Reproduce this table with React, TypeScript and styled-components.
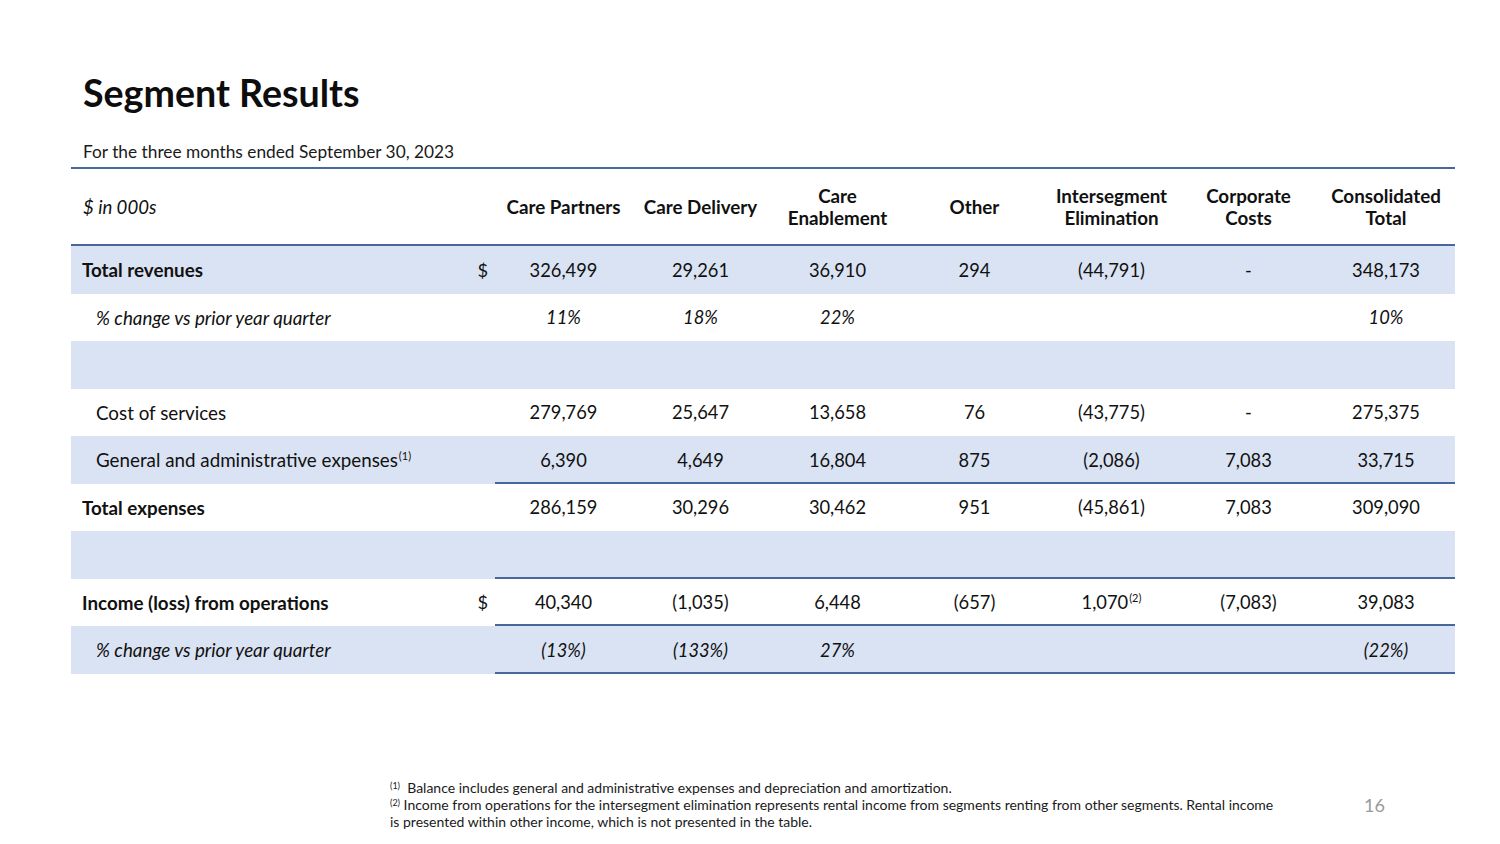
import React from "react";
import styled, { createGlobalStyle, css } from "styled-components";

const Global = createGlobalStyle`
  html, body { margin: 0; padding: 0; background: #ffffff; }
  body { font-family: Lato, "Open Sans", Arial, sans-serif; color: #111111; }
  * { box-sizing: border-box; }
`;

const RULE = "#48679a";
const SHADE = "#dae3f3";
const COLS = "424px repeat(6, 137px) 138px";

const Slide = styled.div`
  width: 1500px;
  height: 844px;
  display: flex;
  flex-direction: column;
  padding: 0 45px 0 71px;
  overflow: hidden;
`;

const Title = styled.h1`
  margin: 69px 0 0 12px;
  font-size: 37.6px;
  line-height: 48px;
  font-weight: 700;
  color: #0d0d0d;
`;

const Caption = styled.div`
  margin-top: 25px;
  padding: 0 0 5px 12px;
  font-size: 17.3px;
  line-height: 20px;
  border-bottom: 2px solid ${RULE};
  color: #1a1a1a;
`;

const Table = styled.div`
  display: flex;
  flex-direction: column;
`;

const HeadRow = styled.div`
  display: grid;
  grid-template-columns: ${COLS};
  height: 77px;
  border-bottom: 2px solid ${RULE};
  align-items: center;
`;

const HeadLabel = styled.div`
  padding-left: 12px;
  font-size: 18.6px;
  font-style: italic;
`;

const HeadCell = styled.div`
  text-align: center;
  font-size: 18.8px;
  font-weight: 700;
  line-height: 22px;
`;

const Row = styled.div<{ $shade?: boolean }>`
  display: grid;
  grid-template-columns: ${COLS};
  height: 47.5px;
  background: ${(p) => (p.$shade ? SHADE : "#ffffff")};
`;

const LabelCell = styled.div<{ $bold?: boolean; $indent?: boolean; $italic?: boolean }>`
  display: flex;
  align-items: center;
  justify-content: space-between;
  padding: 0 7px 0 ${(p) => (p.$indent ? "25px" : "11px")};
  font-size: 18.8px;
  font-weight: ${(p) => (p.$bold ? 700 : 400)};
  font-style: ${(p) => (p.$italic ? "italic" : "normal")};
`;

const Dollar = styled.span`
  font-weight: 400;
  font-style: normal;
  font-size: 18.2px;
`;

const ValueCell = styled.div<{ $rule?: boolean; $italic?: boolean }>`
  display: flex;
  align-items: center;
  justify-content: center;
  font-size: 18.3px;
  font-style: ${(p) => (p.$italic ? "italic" : "normal")};
  ${(p) =>
    p.$rule &&
    css`
      box-shadow: inset 0 -2px 0 ${RULE};
    `}
`;

const Sup = styled.sup`
  font-size: 11px;
  line-height: 0;
  vertical-align: 7px;
  margin-left: 1px;
`;

const Footer = styled.div`
  margin-top: auto;
  margin-bottom: 14px;
  display: flex;
  align-items: center;
`;

const Notes = styled.div`
  margin-left: 319px;
  width: 893px;
  font-size: 14px;
  line-height: 17px;
  color: #1a1a1a;
`;

const NoteSup = styled.sup`
  font-size: 9px;
  line-height: 0;
  vertical-align: 4px;
`;

const PageNum = styled.div`
  margin-left: auto;
  margin-right: 70px;
  font-size: 18px;
  color: #9a9a9a;
`;

type RowDef = {
  label: string;
  labelSup?: string;
  bold?: boolean;
  indent?: boolean;
  italic?: boolean;
  dollar?: boolean;
  shade?: boolean;
  rule?: boolean;
  values: (string | { v: string; sup: string })[];
};

const heads: React.ReactNode[] = [
  "Care Partners",
  "Care Delivery",
  <>Care<br />Enablement</>,
  "Other",
  <>Intersegment<br />Elimination</>,
  <>Corporate<br />Costs</>,
  <>Consolidated<br />Total</>,
];

const blank = ["", "", "", "", "", "", ""];

const rows: RowDef[] = [
  { label: "Total revenues", bold: true, dollar: true, shade: true, values: ["326,499", "29,261", "36,910", "294", "(44,791)", "-", "348,173"] },
  { label: "% change vs prior year quarter", indent: true, italic: true, values: ["11%", "18%", "22%", "", "", "", "10%"] },
  { label: "", shade: true, values: blank },
  { label: "Cost of services", indent: true, values: ["279,769", "25,647", "13,658", "76", "(43,775)", "-", "275,375"] },
  { label: "General and administrative expenses", labelSup: "(1)", indent: true, shade: true, rule: true, values: ["6,390", "4,649", "16,804", "875", "(2,086)", "7,083", "33,715"] },
  { label: "Total expenses", bold: true, values: ["286,159", "30,296", "30,462", "951", "(45,861)", "7,083", "309,090"] },
  { label: "", shade: true, rule: true, values: blank },
  { label: "Income (loss) from operations", bold: true, dollar: true, rule: true, values: ["40,340", "(1,035)", "6,448", "(657)", { v: "1,070", sup: "(2)" }, "(7,083)", "39,083"] },
  { label: "% change vs prior year quarter", indent: true, italic: true, shade: true, rule: true, values: ["(13%)", "(133%)", "27%", "", "", "", "(22%)"] },
];

export default function App() {
  return (
    <>
      <Global />
      <Slide>
        <Title>Segment Results</Title>
        <Caption>For the three months ended September 30, 2023</Caption>
        <Table>
          <HeadRow>
            <HeadLabel>$ in 000s</HeadLabel>
            {heads.map((h, i) => (
              <HeadCell key={i}>{h}</HeadCell>
            ))}
          </HeadRow>
          {rows.map((r, i) => (
            <Row key={i} $shade={r.shade}>
              <LabelCell $bold={r.bold} $indent={r.indent} $italic={r.italic}>
                <span>
                  {r.label}
                  {r.labelSup && <Sup>{r.labelSup}</Sup>}
                </span>
                {r.dollar && <Dollar>$</Dollar>}
              </LabelCell>
              {r.values.map((v, j) => (
                <ValueCell key={j} $rule={r.rule} $italic={r.italic}>
                  {typeof v === "string" ? (
                    v
                  ) : (
                    <span>
                      {v.v}
                      <Sup>{v.sup}</Sup>
                    </span>
                  )}
                </ValueCell>
              ))}
            </Row>
          ))}
        </Table>
        <Footer>
          <Notes>
            <NoteSup>(1)</NoteSup>&nbsp; Balance includes general and administrative expenses and depreciation and amortization.
            <br />
            <NoteSup>(2)</NoteSup> Income from operations for the intersegment elimination represents rental income from segments renting from other segments. Rental income is presented within other income, which is not presented in the table.
          </Notes>
          <PageNum>16</PageNum>
        </Footer>
      </Slide>
    </>
  );
}
